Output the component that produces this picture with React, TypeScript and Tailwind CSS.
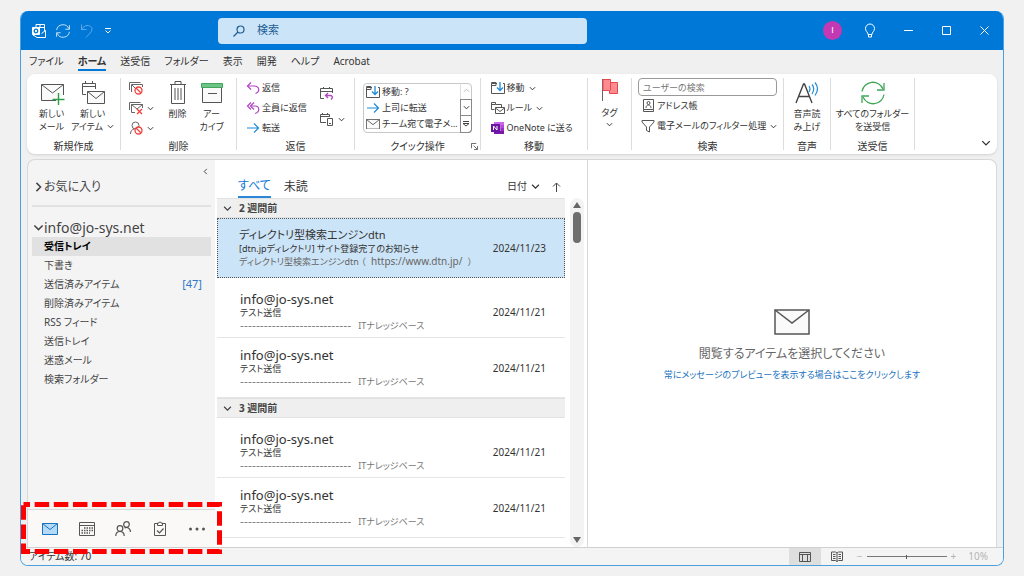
import { useState } from "react";
import type { ReactNode } from "react";
import clsx from "clsx";

const FOLDERS = [
  { name: "受信トレイ" },
  { name: "下書き" },
  { name: "送信済みアイテム", count: "[47]" },
  { name: "削除済みアイテム" },
  { name: "RSS フィード" },
  { name: "送信トレイ" },
  { name: "迷惑メール" },
  { name: "検索フォルダー" },
];

const TABS = ["ファイル", "ホーム", "送受信", "フォルダー", "表示", "開発", "ヘルプ", "Acrobat"];

const DASHES = "----------------------------";

function Caret({ className = "size-[7px]" }: { className?: string }) {
  return (
    <svg viewBox="0 0 8 8" className={clsx("shrink-0", className)} fill="none" stroke="currentColor" strokeWidth="1.1">
      <path d="M1 2.5 4 5.5 7 2.5" />
    </svg>
  );
}

function Mail({ className, fill = "#fafafa" }: { className?: string; fill?: string }) {
  return (
    <svg viewBox="0 0 36 26" className={className} fill={fill} stroke="currentColor" strokeWidth="1.5">
      <path d="M1 1h34v24H1z" />
      <path d="M1 1l17 13L35 1" fill="none" />
    </svg>
  );
}

function SmallMail({ className, fill = "#fafafa" }: { className?: string; fill?: string }) {
  return (
    <svg viewBox="0 0 16 12" className={className} fill={fill} stroke="currentColor">
      <path d="M.5.5h15v11H.5z" />
      <path d="M.5.5L8 6.5l7.500-6" fill="none" />
    </svg>
  );
}

function SyncIcon({ className }: { className?: string }) {
  return (
    <svg viewBox="0 0 24 24" className={className} fill="none" stroke="currentColor" strokeWidth="1.3">
      <path d="M1 10.5A11 11 0 0 1 22 8M23 13.5A11 11 0 0 1 2 16" />
      <path d="M23 2v7h-7M1 22v-7h7" />
    </svg>
  );
}

function NewMailIcon() {
  return (
    <svg viewBox="0 0 26 24" className="h-6 w-[26px]" fill="none" stroke="#555">
      <path d="M17 19.5H2.500V3.500h22V14" fill="#fafafa" />
      <path d="M2.500 3.500l11 8.500 11-8.500" />
      <path d="M19.500 12v12M13.500 18.500h12" stroke="#2e9e4a" strokeWidth="1.4" />
    </svg>
  );
}

function NewItemIcon() {
  return (
    <svg viewBox="0 0 26 24" className="h-6 w-[26px]" fill="none" stroke="#555">
      <path d="M6 13.500H2.500V2.500h13V8M2.500 5.500h13M5.500 0v3M12.500 0v3" />
      <path d="M7.500 10.500h17v12h-17z" fill="#fafafa" />
      <path d="M7.500 10.500l8.500 7 8.500-7" />
    </svg>
  );
}

function Forbid() {
  return (
    <>
      <circle cx="9.500" cy="9.500" r="3.500" fill="#fff" stroke="#f0403c" strokeWidth="1.300" />
      <path d="M7 7l5 5" stroke="#f0403c" strokeWidth="1.300" />
    </>
  );
}

function JunkRuleIcon() {
  return (
    <svg viewBox="0 0 14 14" className="size-[14px]" fill="none" stroke="#666">
      <path d="M.5 9V1.500h11M2.500 11V3.500h11V6M2.500 3.500L6 7" />
      <Forbid />
    </svg>
  );
}

function CleanIcon() {
  return (
    <svg viewBox="0 0 14 14" className="size-[14px]" fill="none" stroke="#666">
      <path d="M.5 9V1.500h11M6 11.500H2.500v-8h11V7M2.500 3.500L8 8l5.500-4.500" />
      <path d="M8 8l5 5M13 8l-5 5" stroke="#f0403c" strokeWidth="1.300" />
    </svg>
  );
}

function BlockIcon() {
  return (
    <svg viewBox="0 0 14 14" className="size-[14px]" fill="none" stroke="#666">
      <circle cx="6.500" cy="4.500" r="3.500" />
      <path d="M1.500 13c0-3 1.500-4.500 3.500-5" />
      <Forbid />
    </svg>
  );
}

function TrashIcon() {
  return (
    <svg viewBox="0 0 18 24" className="h-6 w-[18px]" fill="none" stroke="#555">
      <path d="M1 3.500h16M6 3V.5h6V3M2.500 4v18.500h13V4" />
      <path d="M6 7v12M9 7v12M12 7v12" />
    </svg>
  );
}

function ArchiveIcon() {
  return (
    <svg viewBox="0 0 24 24" className="size-6" fill="none" stroke="#555">
      <path d="M2.500 7v14.500h19V7" fill="#fafafa" />
      <path d="M1.500 2.500h21v4h-21z" fill="#6cc585" stroke="#43a660" />
      <path d="M8 12.500h9" />
    </svg>
  );
}

function ReplyIcon({ all }: { all?: boolean }) {
  return (
    <svg viewBox="0 0 14 14" className="size-[14px]" fill="none" stroke="#b146c2" strokeWidth="1.200">
      <path d="M5 1.500L1.500 5 5 8.500" />
      {all && <path d="M8 1.500L4.500 5 8 8.500" />}
      <path d={all ? "M4.500 5H9c5 0 5 6 0 7.500" : "M1.500 5H8c6 0 6 6 1.500 7.500"} />
    </svg>
  );
}

function ForwardIcon() {
  return (
    <svg viewBox="0 0 14 14" className="size-[14px]" fill="none" stroke="#1e8bd8" strokeWidth="1.200">
      <path d="M1 7h11.500M8 2.500L12.500 7 8 11.500" />
    </svg>
  );
}

function MeetingIcon() {
  return (
    <svg viewBox="0 0 14 14" className="size-[14px]" fill="none" stroke="#555">
      <path d="M4 12.500H.5v-10h12V7M.5 5.500h12M3.500 1v2M9.500 1v2" />
      <path d="M8 7L5.500 9.500 8 12M6 9.500h4c3 0 3 2.500 1 4" stroke="#b146c2" strokeWidth="1.300" />
    </svg>
  );
}

function DeviceIcon() {
  return (
    <svg viewBox="0 0 14 14" className="size-[14px]" fill="none" stroke="#555">
      <path d="M6 10.500H.5v-8h9V5M.5 4.500h9M2.500 1v2M7.500 1v2" />
      <path d="M7.500 6.500h5v7h-5zM9 11.500h2" />
    </svg>
  );
}

function MoveIcon() {
  return (
    <svg viewBox="0 0 14 14" className="size-[14px]" fill="none" stroke="#555">
      <path d="M6 2.500H.5v10h13v-10H12M.5 4.500H5V1.500H.5v1" />
      <path d="M9 1v8M6 6.500l3 3 3-3" stroke="#1e8bd8" strokeWidth="1.300" />
    </svg>
  );
}

function RulesIcon() {
  return (
    <svg viewBox="0 0 14 14" className="size-[14px]" fill="none" stroke="#555">
      <path d="M3.500 8.500H.5v-7h4v2h6V6M.5 3.500h4" />
      <path d="M4.500 6.500h9v6h-9zM4.500 7L9 10.500 13.500 7" />
    </svg>
  );
}

function OneNoteIcon() {
  return (
    <svg viewBox="0 0 14 14" className="size-[14px]">
      <path d="M3 1h10v12H3z" fill="#ca64ea" />
      <path d="M10 4h3v3h-3z" fill="#ae4bd5" />
      <path d="M10 7h3v3h-3z" fill="#9332bf" />
      <path d="M3 10h10v3H3z" fill="#7719aa" />
      <path d="M0 3h9v8H0z" fill="#6b16a0" />
      <path d="M2.500 9V5l3.500 4V5" fill="none" stroke="#fff" />
    </svg>
  );
}

function FlagIcon() {
  return (
    <svg viewBox="0 0 18 24" className="h-6 w-[18px]">
      <path d="M1.500 1v22" stroke="#666" />
      <path d="M2 1.500h7.500v3h7v11h-8v-3H2z" fill="#ff8a8f" stroke="#e5484d" />
      <path d="M9.500 4.500v8" stroke="#e5484d" />
    </svg>
  );
}

function AddressIcon() {
  return (
    <svg viewBox="0 0 14 14" className="size-[14px]" fill="none" stroke="#555">
      <path d="M2.500.5h10v10h-10zM2.500 10.500v2h10v-2" />
      <circle cx="7.500" cy="4" r="1.500" />
      <path d="M5 9c0-4 5-4 5 0" />
    </svg>
  );
}

function FilterIcon() {
  return (
    <svg viewBox="0 0 14 14" className="size-[14px]" fill="none" stroke="#555">
      <path d="M1 1.500h12v1.500L8.500 8v5l-3-1.500V8L1 3z" />
    </svg>
  );
}

function ReadAloudIcon() {
  return (
    <svg viewBox="0 0 26 24" className="h-6 w-[26px]" fill="none" stroke="#444" strokeWidth="1.400">
      <path d="M2 22L9.500 3h1L18 22M4.500 15.500h11" />
      <path d="M15 5q2 2.500 0 6M18 3.500q3.500 4 0 9.500M21 1.500q5 6 0 13" stroke="#1e8bd8" strokeWidth="1.200" />
    </svg>
  );
}

function Group({ label, className, children }: { label?: string; className: string; children: ReactNode }) {
  return (
    <section className={clsx("relative flex shrink-0 flex-col border-r border-[#dcdcdc]", className)}>
      <div className="flex flex-1 justify-center">{children}</div>
      <h3 className="h-2 text-center text-[10px] leading-2">{label}</h3>
    </section>
  );
}

function BigButton({ icon, lines, caret, className }: { icon: ReactNode; lines: string[]; caret?: boolean; className: string }) {
  return (
    <button className={clsx("flex flex-col items-center pt-[3px] leading-[13px] whitespace-nowrap", className)}>
      {icon}
      <span className="mt-[2px]">{lines[0]}</span>
      <span className="flex items-center gap-1">
        {lines[1]}
        {caret && <Caret />}
      </span>
    </button>
  );
}

function SmallButton({ icon, label, caret }: { icon: ReactNode; label?: string; caret?: boolean }) {
  return (
    <button aria-label={label ? undefined : "オプション"} className="flex h-5 items-center gap-[2px]">
      {icon}
      {label}
      {caret && <Caret className="ml-[2px] size-[7px]" />}
    </button>
  );
}

function TitleBar() {
  return (
    <header className="flex h-[39px] shrink-0 items-center bg-[#0078d7] text-white">
      <div className="flex w-[197px] items-center gap-[10px] pl-[11px]">
        <svg viewBox="0 0 14 14" className="size-[14px]" fill="none" stroke="#fff">
          <path d="M4 3V.5h8.500V7M4 3.500h8.500M8 .5v3M1 11.500h1l3 2h8.500v-7l-4 3" />
          <path d="M.5 3.500h7v7h-7z" fill="#fff" />
          <circle cx="4" cy="7" r="1.800" stroke="#0078d7" strokeWidth="1.300" />
        </svg>
        <button aria-label="送受信"><SyncIcon className="size-[14px]" /></button>
        <button aria-label="元に戻す" className="text-[#5fa9e6]">
          <svg viewBox="0 0 14 14" className="size-[14px]" fill="none" stroke="currentColor">
            <path d="M1.500.5v5h5M1.500 5.500C5-.5 12 1 12 5c0 3-3 5-6 8.500" />
          </svg>
        </button>
        <button aria-label="カスタマイズ">
          <svg viewBox="0 0 8 8" className="size-2" fill="none" stroke="#fff">
            <path d="M1 1.500h6M1.500 3.500L4 6l2.500-2.500" />
          </svg>
        </button>
      </div>
      <label className="flex h-[26px] w-[369px] items-center gap-3 rounded-sm bg-[#cce4f7] pl-[15px] text-[#1b5c93]">
        <svg viewBox="0 0 12 12" className="size-3" fill="none" stroke="currentColor" strokeWidth="1.200">
          <circle cx="7.500" cy="4.500" r="3.500" />
          <path d="M5 7L.5 11.500" />
        </svg>
        <input type="search" aria-label="検索" placeholder="検索" className="flex-1 bg-transparent text-[11px] outline-none placeholder:text-[#1b5c93]" />
      </label>
      <div className="ml-auto flex items-center">
        <button className="size-[19px] rounded-full bg-[#c239b3] font-['Liberation_Sans',sans-serif] text-[9px]">I</button>
        <button aria-label="ヒント" className="flex w-14 justify-center">
          <svg viewBox="0 0 12 16" className="h-4 w-3" fill="none" stroke="#fff">
            <path d="M4 11.500C4 9 1.500 8.500 1.500 5.500a4.500 4.500 0 0 1 9 0C10.500 8.500 8 9 8 11.500zM4.500 11.500v2.500h3v-2.500" />
          </svg>
        </button>
        <button aria-label="最小化" className="flex w-5 justify-center">
          <svg viewBox="0 0 9 9" className="size-[9px]" stroke="#fff"><path d="M0 4.500h9" /></svg>
        </button>
        <button aria-label="最大化" className="flex w-14 justify-center">
          <svg viewBox="0 0 9 9" className="size-[9px]" fill="none" stroke="#fff"><path d="M.5.5h8v8h-8z" /></svg>
        </button>
        <button aria-label="閉じる" className="mr-[9px] flex w-5 justify-center">
          <svg viewBox="0 0 9 9" className="size-[9px]" stroke="#fff"><path d="M.5.5l8 8M8.500.5l-8 8" /></svg>
        </button>
      </div>
    </header>
  );
}

function Ribbon() {
  return (
    <div className="mx-[6px] flex h-20 shrink-0 rounded-lg bg-white py-1 text-[9px] shadow-sm">
      <Group label="新規作成" className="w-[94px]">
        <BigButton icon={<NewMailIcon />} lines={["新しい", "メール"]} className="w-[38px]" />
        <BigButton icon={<NewItemIcon />} lines={["新しい", "アイテム"]} caret className="w-11" />
      </Group>
      <Group label="削除" className="w-[116px]">
        <div className="flex w-8 flex-col">
          <SmallButton icon={<JunkRuleIcon />} />
          <SmallButton icon={<CleanIcon />} caret />
          <SmallButton icon={<BlockIcon />} caret />
        </div>
        <BigButton icon={<TrashIcon />} lines={["削除"]} className="w-[34px]" />
        <BigButton icon={<ArchiveIcon />} lines={["アー", "カイブ"]} className="w-[34px]" />
      </Group>
      <Group label="返信" className="w-[118px]">
        <div className="flex w-[74px] flex-col">
          <SmallButton icon={<ReplyIcon />} label="返信" />
          <SmallButton icon={<ReplyIcon all />} label="全員に返信" />
          <SmallButton icon={<ForwardIcon />} label="転送" />
        </div>
        <div className="flex flex-col gap-[6px] pt-[5px]">
          <SmallButton icon={<MeetingIcon />} />
          <SmallButton icon={<DeviceIcon />} caret />
        </div>
      </Group>
      <Group label="クイック操作" className="w-[126px]">
        <div className="mt-[5px] flex h-[50px] w-[109px] rounded-sm border border-[#c8c8c8]">
          <div className="flex min-w-0 flex-1 flex-col pl-[2px] whitespace-nowrap">
            <button className="flex h-4 items-center gap-[2px]"><MoveIcon />移動: ?</button>
            <button className="flex h-4 items-center gap-[2px]"><ForwardIcon />上司に転送</button>
            <button className="flex h-4 items-center gap-[2px]">
              <SmallMail className="w-[14px] shrink-0 text-[#555]" />チーム宛て電子メ…
            </button>
          </div>
          <div className="-my-px -mr-px flex w-3 shrink-0 flex-col">
            <button aria-label="上へ" className="flex flex-1 items-center justify-center border-l border-[#ddd] text-[#bbb]"><Caret className="size-[7px] rotate-180" /></button>
            <button aria-label="下へ" className="flex flex-1 items-center justify-center border border-[#888]"><Caret /></button>
            <button aria-label="その他" className="flex flex-1 items-center justify-center rounded-br-sm border border-t-0 border-[#888]">
              <svg viewBox="0 0 8 8" className="size-2" fill="none" stroke="#444"><path d="M1 1.500h6M1 3.500h6L4 6z" /></svg>
            </button>
          </div>
        </div>
        <svg viewBox="0 0 8 8" className="absolute right-[2px] bottom-0 size-[7px]" fill="none" stroke="#555">
          <path d="M.5 6V.5H6M3 3l4 4M7.500 3.500v4h-4" />
        </svg>
      </Group>
      <Group label="移動" className="w-[107px]">
        <div className="flex w-[87px] flex-col whitespace-nowrap">
          <SmallButton icon={<MoveIcon />} label="移動" caret />
          <SmallButton icon={<RulesIcon />} label="ルール" caret />
          <SmallButton icon={<OneNoteIcon />} label="OneNote に送る" />
        </div>
      </Group>
      <Group className="w-11">
        <button className="flex flex-col items-center leading-[13px]">
          <FlagIcon />
          <span className="mt-1">タグ</span>
          <Caret className="mt-[2px] size-[7px]" />
        </button>
      </Group>
      <Group label="検索" className="w-[152px]">
        <div className="flex w-[139px] flex-col whitespace-nowrap">
          <input aria-label="ユーザーの検索" placeholder="ユーザーの検索" className="h-[18px] rounded-sm border border-[#999] px-1 outline-none placeholder:text-[#777]" />
          <div className="pl-[3px]">
            <SmallButton icon={<AddressIcon />} label="アドレス帳" />
            <SmallButton icon={<FilterIcon />} label="電子メールのフィルター処理" caret />
          </div>
        </div>
      </Group>
      <Group label="音声" className="w-[47px]">
        <BigButton icon={<ReadAloudIcon />} lines={["音声読", "み上げ"]} className="w-10" />
      </Group>
      <Group label="送受信" className="w-[84px]">
        <BigButton icon={<SyncIcon className="size-6 text-[#3fa655]" />} lines={["すべてのフォルダー", "を送受信"]} className="w-20" />
      </Group>
      <button aria-label="リボンを折りたたむ" className="mt-auto mr-[6px] mb-[2px] ml-auto">
        <Caret className="size-[10px]" />
      </button>
    </div>
  );
}

function Sidebar() {
  const [selected, setSelected] = useState("受信トレイ");

  return (
    <aside className="flex w-[188px] shrink-0 flex-col rounded-tl-lg border-t border-l border-[#d8d8d8] bg-[#f4f4f4] text-[#444]">
      <button aria-label="折りたたむ" className="mt-2 mr-[6px] self-end"><Caret className="size-[7px] rotate-90" /></button>
      <button className="mx-1 mb-[10px] flex h-8 items-start border-b-2 border-[#e2e2e2] pl-px text-[12px] leading-6">
        <Caret className="size-[11px] h-6 -rotate-90" />
        お気に入り
      </button>
      <button className="ml-[5px] flex h-5 items-center text-[14px]">
        <Caret className="size-[11px]" />
        info@jo-sys.net
      </button>
      <ul className="mx-1 text-[10px]">
        {FOLDERS.map((f) => (
          <li key={f.name}>
            <button
              onClick={() => setSelected(f.name)}
              className={clsx(
                "flex h-[19px] w-full items-center justify-between pr-[9px] pl-3",
                selected === f.name && "bg-[#e1e1e1] font-bold text-black",
              )}
            >
              {f.name}
              {f.count && <span className="text-[11px] text-[#2f78c8]">{f.count}</span>}
            </button>
          </li>
        ))}
      </ul>
      <nav className="mt-auto flex h-[38px] items-center border-t border-[#d8d8d8] bg-[#faf9f8] pl-1 text-[#555]">
        <button aria-label="メール" className="flex w-[37px] justify-center"><SmallMail className="w-4 text-[#1a73c0]" fill="#b5daf7" /></button>
        <button aria-label="予定表" className="flex w-[37px] justify-center">
          <svg viewBox="0 0 16 16" className="size-4" fill="none" stroke="currentColor">
            <path d="M.5 1.500h15v13H.5zM.5 4.500h15" />
            <path d="M5 7h9M2.500 9.500H14M2.500 12H11" strokeWidth="1.500" strokeDasharray="1.500 1" />
          </svg>
        </button>
        <button aria-label="連絡先" className="flex w-[37px] justify-center">
          <svg viewBox="0 0 16 16" className="size-4" fill="none" stroke="currentColor" strokeWidth="1.200">
            <circle cx="5" cy="7.500" r="2.800" />
            <path d="M.8 15c0-6 8.400-6 8.400 0" />
            <circle cx="11.500" cy="3.500" r="2.800" />
            <path d="M9.500 7c2.500-1.500 6 0 6 4" />
          </svg>
        </button>
        <button aria-label="タスク" className="flex w-[37px] justify-center">
          <svg viewBox="0 0 14 16" className="h-4 w-[14px]" fill="none" stroke="currentColor">
            <path d="M4.500 2.500h-3v12h11v-12h-3M4.500 4.500V2h1.500a1 1 0 0 1 2 0h1.500v2.500z" />
            <path d="M4 9.500l2.500 2.500 4-4.500" strokeWidth="1.200" />
          </svg>
        </button>
        <button aria-label="その他" className="flex w-[37px] justify-center">
          <svg viewBox="0 0 18 4" className="h-1 w-[18px]" fill="currentColor">
            <circle cx="2.500" cy="2" r="1.500" /><circle cx="9" cy="2" r="1.500" /><circle cx="15.500" cy="2" r="1.500" />
          </svg>
        </button>
      </nav>
    </aside>
  );
}

function WeekHeader({ label }: { label: string }) {
  return (
    <h2 className="flex h-5 items-center gap-[7px] border-y border-[#e2e2e2] bg-[#efefef] pl-[6px] text-[10px] font-bold text-[#444]">
      <Caret className="size-[9px]" />
      {label}
    </h2>
  );
}

function Message({ roomy }: { roomy?: boolean }) {
  return (
    <button className={clsx("flex h-[60px] w-full flex-col border-b border-[#e5e5e5] pr-[19px] pl-[23px] text-left text-[9px] leading-[13px]", roomy ? "pt-[14px]" : "pt-[10px]")}>
      <span className="text-[13px] leading-[14px]">info@jo-sys.net</span>
      <span className="flex w-full justify-between">
        テスト送信
        <span className="text-[10px]">2024/11/21</span>
      </span>
      <span className="flex gap-[7px] text-[#777]">
        <span className="font-['DejaVu_Sans'] text-[11px]">{DASHES}</span>
        ITナレッジベース
      </span>
    </button>
  );
}

function MessageList() {
  return (
    <section className="flex w-[373px] shrink-0 flex-col border-t border-r border-[#d8d8d8] bg-white pl-[2px]">
      <div className="flex h-[38px] items-end pr-[26px] pl-[21px] text-[12px]">
        <button className="h-[23px] border-b-2 border-[#2b88d8] leading-5 text-[#0f78d4]">すべて</button>
        <button className="ml-[13px] h-[23px] leading-5">未読</button>
        <button className="ml-auto flex h-[23px] items-center gap-1 text-[10px]">日付<Caret className="size-[9px]" /></button>
        <button aria-label="昇順" className="ml-3 flex h-[23px] items-center">
          <svg viewBox="0 0 9 10" className="h-[10px] w-[9px]" fill="none" stroke="#444"><path d="M4.500 10V1M1 4.500L4.500 1 8 4.500" /></svg>
        </button>
      </div>
      <div className="flex flex-1">
        <div className="min-w-0 flex-1">
          <WeekHeader label="2 週間前" />
          <button className="flex h-[60px] w-full flex-col border border-dotted border-[#555] bg-[#cce4f7] pt-[9px] pr-[18px] pl-[21px] text-left text-[9px] leading-[13px]">
            <span className="text-[11px] leading-[14px]">ディレクトリ型検索エンジンdtn</span>
            <span className="flex w-full justify-between">
              [dtn.jpディレクトリ] サイト登録完了のお知らせ
              <span className="text-[10px]">2024/11/23</span>
            </span>
            <span className="text-[#666]">
              ディレクトリ型検索エンジンdtn （ <span className="mx-[3px] text-[10px]">https://www.dtn.jp/</span> ）
            </span>
          </button>
          <Message roomy />
          <Message />
          <WeekHeader label="3 週間前" />
          <Message roomy />
          <Message />
        </div>
        <div className="mr-[3px] ml-[5px] flex w-[14px] flex-col items-center rounded-full bg-[#f3f3f3] py-1 text-[#666]">
          <svg viewBox="0 0 8 6" className="h-[6px] w-2" fill="currentColor"><path d="M4 0l4 6H0z" /></svg>
          <div className="mt-1 h-[31px] w-2 rounded-full bg-[#6e6e6e]" />
          <svg viewBox="0 0 8 6" className="mt-auto h-[6px] w-2" fill="currentColor"><path d="M4 6l4-6H0z" /></svg>
        </div>
      </div>
    </section>
  );
}

export default function App() {
  return (
    <main className="flex h-screen flex-col bg-[#f1f1f1] px-5 pt-[11px] pb-[10px] font-['Noto_Sans','Noto_Sans_CJK_JP',sans-serif] text-[#333] [font-feature-settings:'palt']">
      <div className="relative flex min-h-0 flex-1 flex-col">
        <div className="flex min-h-0 flex-1 flex-col overflow-hidden rounded-lg border border-t-0 border-[#4a9fe0] bg-[#f0f0f0]">
          <TitleBar />
          <nav className="flex h-6 shrink-0 items-end gap-[14px] pb-[3px] pl-2 text-[10px]">
            {TABS.map((t) => (
              <button key={t} className={clsx("h-[18px] border-b-2 leading-4", t === "ホーム" ? "border-[#0078d7] font-bold" : "border-transparent")}>
                {t}
              </button>
            ))}
          </nav>
          <Ribbon />
          <div className="mx-[6px] mt-[5px] flex min-h-0 flex-1">
            <Sidebar />
            <MessageList />
            <section className="flex flex-1 flex-col items-center rounded-tr-lg border-t border-r border-[#d8d8d8] bg-white pt-[149px]">
              <Mail className="w-9 text-[#555]" />
              <p className="mt-[7px] text-[12px] leading-6 text-[#666]">閲覧するアイテムを選択してください</p>
              <a href="#preview" className="text-[9px] leading-[18px] text-[#1a73c0]">常にメッセージのプレビューを表示する場合はここをクリックします</a>
            </section>
          </div>
          <footer className="flex h-[18px] shrink-0 items-center border-t border-[#d0d0d0] bg-[#f4f4f4] pr-[15px] pl-2 text-[10px]">
            <span>アイテム数: 70</span>
            <button aria-label="標準" className="ml-auto flex h-full w-8 items-center justify-center bg-[#dedede]">
              <svg viewBox="0 0 12 10" className="h-[10px] w-3" fill="none" stroke="#555"><path d="M.5.5h11v9H.5zM.5 2.500h11M3.500 2.500v7M8.500 2.500v7" /></svg>
            </button>
            <button aria-label="閲覧表示" className="flex w-8 justify-center">
              <svg viewBox="0 0 12 11" className="h-[11px] w-3" fill="none" stroke="#555"><path d="M.5 1h4L6 2l1.500-1h4v8.500h-4L6 10.500l-1.500-1h-4zM6 2v8.500M2 3.500h2.500M2 5.500h2.500M2 7.500h2.500M7.500 3.500H10M7.500 5.500H10M7.500 7.500H10" /></svg>
            </button>
            <div className="ml-1 flex items-center gap-1 text-[#b5b5b5]">
              <button aria-label="縮小">−</button>
              <input
                type="range"
                aria-label="ズーム"
                min={0}
                max={20}
                defaultValue={10}
                className="h-px w-20 appearance-none bg-[#777] [&::-webkit-slider-thumb]:h-1 [&::-webkit-slider-thumb]:w-px [&::-webkit-slider-thumb]:appearance-none [&::-webkit-slider-thumb]:bg-[#555]"
              />
              <button aria-label="拡大">+</button>
              <span className="ml-2">10%</span>
            </div>
          </footer>
        </div>
        {/* callout around the bottom navigation */}
        <svg viewBox="0 0 202 52" className="pointer-events-none absolute bottom-3 left-px h-[52px] w-[202px]" fill="none">
          <rect x="2.500" y="2.500" width="196" height="47" stroke="#fe0000" strokeWidth="5" strokeDasharray="14.500 4.650" strokeDashoffset="8" />
        </svg>
      </div>
    </main>
  );
}
